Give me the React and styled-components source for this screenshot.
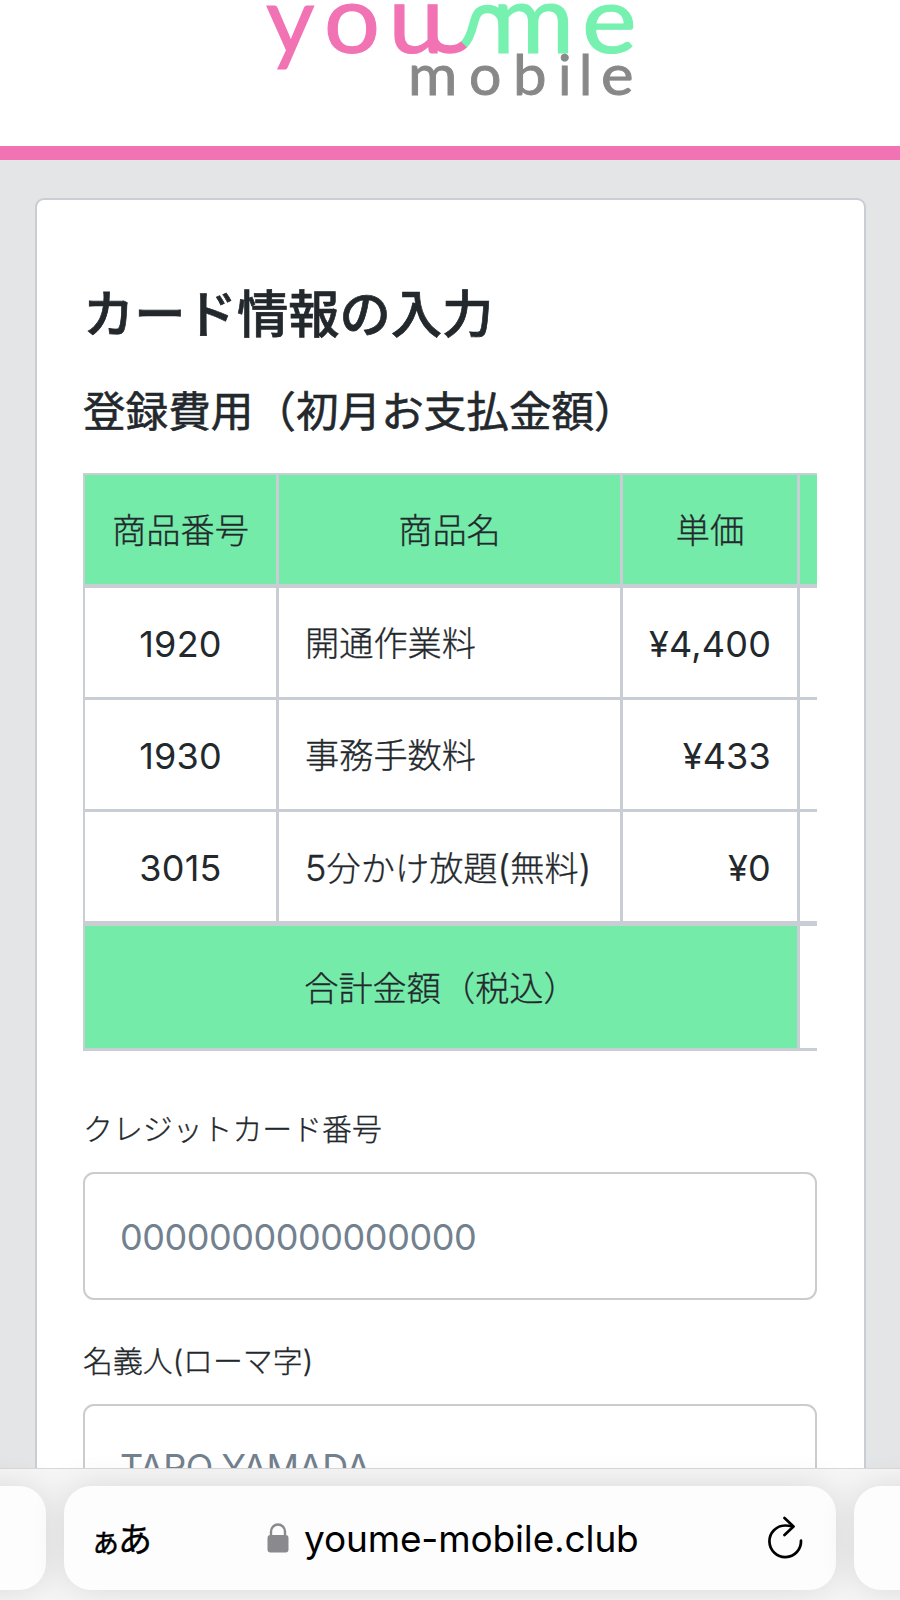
import React from 'react';
import styled, { createGlobalStyle } from 'styled-components';

const GlobalStyle = createGlobalStyle`
  * {
    box-sizing: border-box;
  }
  body {
    margin: 0;
    font-family: Inter, 'Noto Sans CJK JP', sans-serif;
    color: #23282c;
    background-color: #e3e5e7;
  }
`;

const Page = styled.div`
  display: flex;
  flex-direction: column;
  height: 1600px;
  overflow: hidden;
`;

const Content = styled.div`
  flex: 1;
  min-height: 0;
  overflow: hidden;
`;

const Header = styled.header`
  display: flex;
  justify-content: center;
  height: 160px;
  background-color: #fff;
  border-bottom: 14px solid #f173b4;
  svg {
    display: block;
    width: 420px;
    height: 110px;
    font-family: Lato, sans-serif;
  }
`;

const Card = styled.main`
  width: 831px;
  height: 1500px;
  margin: 38px 0 0 35px;
  padding: 78px 46px 0;
  background-color: #fff;
  border: 2px solid #c8ced3;
  border-radius: 9px;
`;

const Title = styled.h1`
  margin: 0;
  font-size: 51.3px;
  line-height: 72px;
  font-weight: 500;
  -webkit-text-stroke: 0.7px currentColor;
`;

const SubTitle = styled.h2`
  margin: 26px 0 0;
  font-size: 42.6px;
  line-height: 72px;
  font-weight: 400;
  -webkit-text-stroke: 0.6px currentColor;
`;

const TableWrap = styled.div`
  width: 734px;
  margin-top: 25px;
  overflow: hidden;
`;

const Table = styled.table`
  width: 917px;
  table-layout: fixed;
  border-spacing: 0;
  border: solid #c8ced3;
  border-width: 2px 0 0 2px;
  font-size: 34.2px;
  line-height: 48px;
`;

const Row = styled.tr`
  height: ${props => props.$height}px;
`;

const Cell = styled.td`
  padding: 3px 26px 0;
  text-align: ${props => props.$align || 'center'};
  font-weight: 300;
  -webkit-text-stroke: 0.3px currentColor;
  white-space: nowrap;
  background-color: ${props => (props.$green ? '#75ebaa' : '#fff')};
  border: solid #c8ced3;
  border-width: 0 3px ${props => props.$bottom || 3}px 0;
`;

const Num = styled.span`
  font-size: 36px;
  font-weight: ${props => (props.$light ? 300 : 400)};
  letter-spacing: 0.2px;
  -webkit-text-stroke: ${props => (props.$light ? '0.4px currentColor' : 0)};
`;

const Label = styled.label`
  display: block;
  margin-top: ${props => props.$top}px;
  font-size: 29.9px;
  line-height: 44px;
  font-weight: 300;
  -webkit-text-stroke: 0.3px currentColor;
`;

const Input = styled.input`
  display: block;
  width: 734px;
  height: 128px;
  margin-top: 21px;
  padding: 1px 35px ${props => props.$lift || 0}px;
  font: 400 36px Inter, sans-serif;
  letter-spacing: ${props => (props.$lift ? -0.85 : -0.45)}px;
  background-color: #fff;
  border: 2px solid #ccc;
  border-radius: 11px;
  &::placeholder {
    color: #73818f;
    opacity: 1;
  }
`;

const BottomBar = styled.nav`
  position: relative;
  display: flex;
  justify-content: center;
  gap: 18px;
  height: 132px;
  padding-top: 17px;
  background-color: #f6f6f6;
  border-top: 1px solid #d9d9da;
`;

const Tab = styled.div`
  flex: none;
  width: 772px;
  height: 104px;
  background-color: #fdfdfd;
  border-radius: 27px;
  box-shadow: 0 0 34px rgba(0, 0, 0, 0.12);
`;

const AddressBar = styled(Tab)`
  display: flex;
  align-items: center;
  padding: 0 33px 0 26px;
  color: #000;
`;

const TextSize = styled.div`
  display: flex;
  align-items: baseline;
  width: 177px;
  font-family: 'Noto Sans CJK JP', sans-serif;
  font-size: 34px;
  line-height: 48px;
  font-weight: 400;
  -webkit-text-stroke: 0.4px currentColor;
  small {
    margin-right: -3px;
    font-size: 31px;
  }
`;

const Url = styled.span`
  flex: 1;
  margin-left: 15px;
  font-size: 37px;
  letter-spacing: -0.15px;
`;

const items = [
  { id: '1920', name: '開通作業料', price: '¥4,400' },
  { id: '1930', name: '事務手数料', price: '¥433' },
  {
    id: '3015',
    name: <><Num $light>5</Num>分かけ放題<Num $light>(</Num>無料<Num $light>)</Num></>,
    price: '¥0',
    bottom: 5,
  },
];

const wordmark = [
  { char: 'y', x: 266, scale: 1, color: '#f173b4' },
  { char: 'o', x: 324, scale: 1.05, color: '#f173b4' },
  { char: 'u', x: 388.5, scale: 1.06, color: '#f173b4' },
  { char: 'm', x: 492, scale: 1.06, color: '#76f1b0' },
  { char: 'e', x: 582, scale: 1.1, color: '#76f1b0' },
];

const tagline = [
  { char: 'm', x: 408, scale: 1.07 },
  { char: 'o', x: 469, scale: 1.02 },
  { char: 'b', x: 513, scale: 1.07 },
  { char: 'i', x: 558, scale: 1 },
  { char: 'l', x: 579, scale: 1 },
  { char: 'e', x: 601, scale: 1.1 },
];

const Logo = () => (
  <svg viewBox="240 0 420 110">
    <g fontSize="94" strokeWidth="1.2">
      {wordmark.map(({ char, x, scale, color }) => (
        <text key={char} transform={`translate(${x} 53) scale(${scale} 1)`} fill={color} stroke={color}>
          {char}
        </text>
      ))}
    </g>
    {/* ribbon joining the two words */}
    <g fill="none" strokeWidth="8.5">
      <path d="M433 37C434 45 441 49.5 450 49.5C456 49.5 461 47.5 464.5 44" stroke="#f173b4" />
      <path d="M464 44.5C477 32 470 9 487 9C497 9 503 15 503 27" stroke="#76f1b0" />
    </g>
    <g fontSize="56" fill="#888" stroke="#888" strokeWidth="0.9">
      {tagline.map(({ char, x, scale }) => (
        <text key={char} transform={`translate(${x} 95) scale(${scale} 1)`}>
          {char}
        </text>
      ))}
    </g>
  </svg>
);

const LockIcon = () => (
  <svg width="22" height="30" viewBox="0 0 22 30">
    <path d="M4 14V8.5a7 7 0 0 1 14 0V14" fill="none" stroke="#8a8a8e" strokeWidth="2.4" />
    <rect x="0.5" y="12" width="21" height="17.5" rx="3" fill="#8a8a8e" />
  </svg>
);

const ReloadIcon = () => (
  <svg width="36" height="44" viewBox="0 0 36 44" fill="none" stroke="#000" strokeWidth="2.7" strokeLinecap="round" strokeLinejoin="round">
    <path d="M34 24.5A15.8 15.8 0 1 1 18.2 9.5C21 9.5 23.5 10 26 10.5" />
    <path d="M17.5 2L26.5 10.5L17.5 19" />
  </svg>
);

const App = () => (
  <Page>
    <GlobalStyle />
    <Content>
      <Header>
        <Logo />
      </Header>
      <Card>
        <Title>カード情報の入力</Title>
        <SubTitle>登録費用（初月お支払金額）</SubTitle>
        <TableWrap>
          <Table>
            <colgroup>
              <col style={{ width: 194 }} />
              <col style={{ width: 344 }} />
              <col style={{ width: 177 }} />
              <col style={{ width: 200 }} />
            </colgroup>
            <thead>
              <Row $height={113}>
                <Cell as="th" $green $bottom={4}>商品番号</Cell>
                <Cell as="th" $green $bottom={4}>商品名</Cell>
                <Cell as="th" $green $bottom={4}>単価</Cell>
                <Cell as="th" $green $bottom={4} />
              </Row>
            </thead>
            <tbody>
              {items.map(item => (
                <Row key={item.id} $height={item.bottom ? 114 : 112}>
                  <Cell $bottom={item.bottom}><Num>{item.id}</Num></Cell>
                  <Cell $bottom={item.bottom} $align="left">{item.name}</Cell>
                  <Cell $bottom={item.bottom} $align="right"><Num>{item.price}</Num></Cell>
                  <Cell $bottom={item.bottom} />
                </Row>
              ))}
            </tbody>
            <tfoot>
              <Row $height={125}>
                <Cell as="th" $green colSpan={3}>合計金額（税込）</Cell>
                <Cell />
              </Row>
            </tfoot>
          </Table>
        </TableWrap>
        <Label htmlFor="number" $top={56}>クレジットカード番号</Label>
        <Input id="number" placeholder="0000000000000000" />
        <Label htmlFor="name" $top={39}>名義人(ローマ字)</Label>
        <Input id="name" $lift={4} placeholder="TARO YAMADA" />
      </Card>
    </Content>
    <BottomBar>
      <Tab />
      <AddressBar>
        <TextSize>
          <small>ぁ</small>あ
        </TextSize>
        <LockIcon />
        <Url>youme-mobile.club</Url>
        <ReloadIcon />
      </AddressBar>
      <Tab />
    </BottomBar>
  </Page>
);

export default App;
